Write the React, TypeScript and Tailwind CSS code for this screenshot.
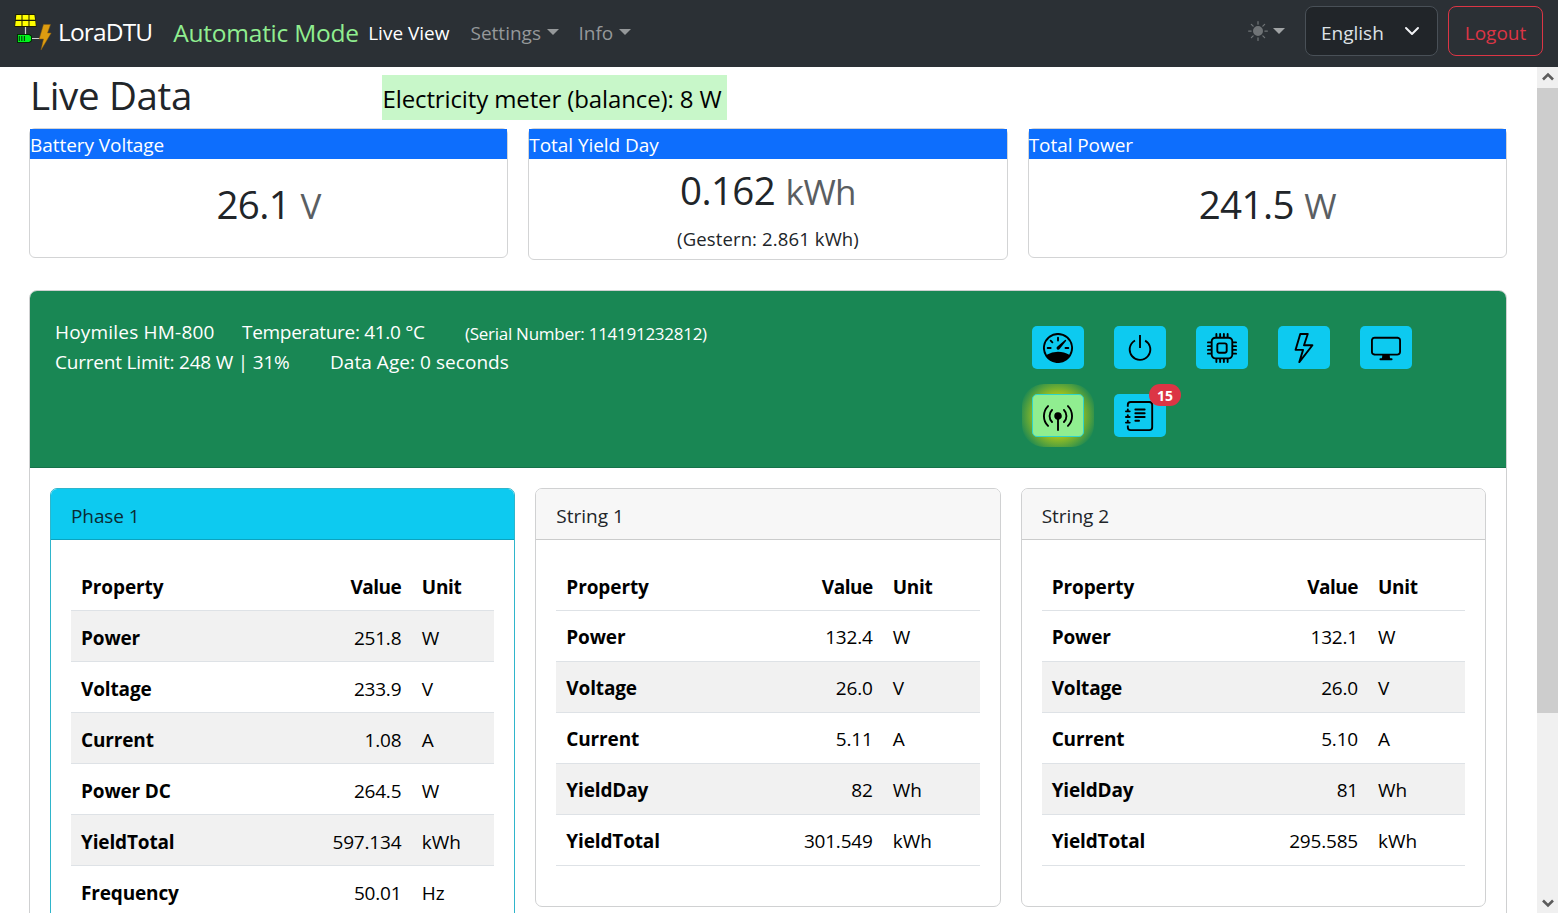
import React from "react";
import {
  BsSpeedometer,
  BsPower,
  BsCpu,
  BsLightning,
  BsDisplay,
  BsBroadcastPin,
  BsJournalText,
  BsSunFill,
} from "react-icons/bs";

type Row = [string, string, string];

const phaseRows: Row[] = [
  ["Power", "251.8", "W"],
  ["Voltage", "233.9", "V"],
  ["Current", "1.08", "A"],
  ["Power DC", "264.5", "W"],
  ["YieldTotal", "597.134", "kWh"],
  ["Frequency", "50.01", "Hz"],
];

const string1Rows: Row[] = [
  ["Power", "132.4", "W"],
  ["Voltage", "26.0", "V"],
  ["Current", "5.11", "A"],
  ["YieldDay", "82", "Wh"],
  ["YieldTotal", "301.549", "kWh"],
];

const string2Rows: Row[] = [
  ["Power", "132.1", "W"],
  ["Voltage", "26.0", "V"],
  ["Current", "5.10", "A"],
  ["YieldDay", "81", "Wh"],
  ["YieldTotal", "295.585", "kWh"],
];

function Caret() {
  return <span className="ml-[6px] inline-block border-x-6 border-t-6 border-x-transparent border-t-current align-[5px]" />;
}

function Logo() {
  return (
    <svg width="38" height="39" viewBox="0 0 38 39" className="shrink-0">
      <path d="M1.500 2H21L22.500 15H.5Z" fill="#1d1d00" />
      <g fill="#ffff00">
        <path d="M2.300 3h5.200v4.800h-5.700zM8.500 3h6v4.800h-6zM15.500 3h4.900l.7 4.800h-5.600z" />
        <path d="M1.700 9h5.800v5h-6.400zM8.500 9h6v5h-6zM15.500 9h5.800l.5 5h-6.300z" />
      </g>
      <path d="M11.500 15V22M18 26.500H26" stroke="#cfcfcf" strokeWidth="1.200" />
      <path d="M3 22H15.500L18 24V29L15.500 31H3Z" fill="#032d03" />
      <path d="M4 23H15L17 24.500V28.500L15 30H4Z" fill="#00f51d" />
      <path d="M5.300 24v5M7.800 24v5M10.400 24v5" stroke="#04400a" strokeWidth="1.100" />
      <path d="M29.500 12.500H36.500L33.500 21H37.200L27 38L29.500 27H25.200Z" fill="#dd9c10" stroke="#8a5f10" strokeWidth=".5" />
    </svg>
  );
}

function SummaryCard({ title, value, unit, note }: { title: string; value: string; unit: string; note?: string }) {
  return (
    <div className={note ? "h-[132px] flex-1 rounded-md border border-[#d3d4d5]" : "h-[130px] flex-1 rounded-md border border-[#d3d4d5]"}>
      <div className="h-[30px] bg-[#0d6efd] text-[19px] leading-[32px] tracking-[-0.06px] text-white">{title}</div>
      <div className={note ? "pt-[7px] text-center" : "pt-[21px] text-center"}>
        <div className="text-[38.5px] leading-[48px] tracking-[-0.6px]">
          {value} <span className="ml-[1px] text-[35px] text-[#5a5e62]">{unit}</span>
        </div>
        {note && <div className="pt-[8px] text-[18.5px] leading-[30px] tracking-[0.13px]">{note}</div>}
      </div>
    </div>
  );
}

function DataCard({ title, rows, primary }: { title: string; rows: Row[]; primary?: boolean }) {
  const unitWidth = primary ? "w-[83px] pl-[10.5px]" : "w-[97px] pl-[10px]";
  return (
    <div
      className={
        primary
          ? "h-[520px] flex-1 rounded-[7px] border border-[#2fb5cb]"
          : "h-[419px] flex-1 rounded-[7px] border border-[#d0d1d2]"
      }
    >
      <div
        className={
          primary
            ? "h-[51px] rounded-t-[6px] border-b border-[#0ba3bf] bg-[#0dcaf0] pl-5 text-[19px] leading-[54px] tracking-[-0.1px] text-[#0a2a33]"
            : "h-[51px] rounded-t-[6px] border-b border-[#cbcccc] bg-[#f7f7f7] pl-5 text-[19px] leading-[54px]"
        }
      >
        {title}
      </div>
      <div className="px-5 pt-[20px] text-black">
        <div className="flex h-[51px] border-b border-[#dee2e6] text-[19px] leading-[55px] font-bold tracking-[-0.3px]">
          <div className="flex-1 pl-[10px] tracking-[-0.1px]">Property</div>
          <div className="pr-[10px] text-right tracking-[-0.5px]">Value</div>
          <div className={unitWidth}>Unit</div>
        </div>
        {rows.map(([name, value, unit], i) => (
          <div
            key={name}
            className={
              (i % 2 === (primary ? 0 : 1) ? "bg-[#f1f1f1] " : "") +
              (primary ? "leading-[54px] " : "leading-[52px] ") +
              "flex h-[51px] border-b border-[#dee2e6] text-[19px]"
            }
          >
            <div className="flex-1 pl-[10px] font-bold tracking-[-0.15px]">{name}</div>
            <div className="pr-[10px] text-right tracking-[-0.2px]">{value}</div>
            <div className={unitWidth}>{unit}</div>
          </div>
        ))}
      </div>
    </div>
  );
}

function ActionButton({ children }: { children: React.ReactNode }) {
  return (
    <div className="relative flex h-[43px] w-[52px] items-center justify-center rounded-[5px] bg-[#0dcaf0] text-[30px] text-black">
      {children}
    </div>
  );
}

export default function App() {
  return (
    <div className="flex h-[913px] w-[1558px] flex-col overflow-hidden bg-white font-['Open_Sans','Noto_Sans',sans-serif] whitespace-nowrap text-[#212529]">
      <nav className="flex h-[67px] shrink-0 items-center bg-[#2b3035] pr-[15px] pb-[5px] pl-[14px] text-[19px]">
        <Logo />
        <span className="ml-[6px] pt-[3px] text-[24.5px] tracking-[-0.85px] text-white">LoraDTU</span>
        <span className="ml-[21px] pt-[5px] text-[24.5px] tracking-[-0.25px] text-[#90ee90]">Automatic Mode</span>
        <span className="ml-[9.5px] pt-[5px] text-white">Live View</span>
        <span className="ml-[21px] pt-[5px] text-[#95989a]">
          Settings
          <Caret />
        </span>
        <span className="ml-[19.5px] pt-[5px] text-[#95989a]">
          Info
          <Caret />
        </span>
        <span className="ml-auto flex items-center text-[20px] text-[#6f7376]">
          <BsSunFill />
          <span className="ml-[5px] inline-block border-x-6 border-t-6 border-x-transparent border-t-[#a0a3a5]" />
        </span>
        <div className="ml-[20px] flex h-[50px] w-[133px] items-center justify-between rounded-[8px] border border-[#495057] bg-[#212529] pr-[17px] pl-[15px] text-[#dee2e6]">
          <span className="pt-[5px]">English</span>
          <svg width="16" height="10" viewBox="0 0 16 10" fill="none" stroke="#f1f3f5" strokeWidth="2" strokeLinecap="round" strokeLinejoin="round">
            <path d="M2 2L8 8L14 2" />
          </svg>
        </div>
        <div className="ml-[10px] flex h-[50px] w-[95px] items-center justify-center rounded-[8px] border border-[#dc3545] pt-[5px] text-[#dc3545]">
          Logout
        </div>
      </nav>

      <div className="flex min-h-0 flex-1">
        <main className="w-[1537px] overflow-hidden pr-[30px] pl-[29px]">
          <div className="flex h-[61px] items-start">
            <h1 className="w-[353px] pt-[3px] pl-[1px] text-[38.5px] leading-[50px] tracking-[-0.35px]">Live Data</h1>
            <div className="mt-[8px] h-[45px] w-[345px] bg-[#c8f7c9] pl-[0.5px] text-[24px] leading-[48px] tracking-[-0.12px] text-black">
              Electricity meter (balance): 8 W
            </div>
          </div>

          <div className="flex items-start gap-[20px]">
            <SummaryCard title="Battery Voltage" value="26.1" unit="V" />
            <SummaryCard title="Total Yield Day" value="0.162" unit="kWh" note="(Gestern: 2.861 kWh)" />
            <SummaryCard title="Total Power" value="241.5" unit="W" />
          </div>

          <section className="mt-[30px] h-[700px] rounded-[8px] border border-[#cfd0d1]">
            <div className="flex h-[177px] justify-between rounded-t-[7px] border-b border-[#16724a] bg-[#198754] text-[19px] text-white">
              <div className="pt-[26px] pl-[25px]">
                <div className="flex h-[30px] leading-[30px]">
                  <span className="w-[187px] tracking-[0.2px]">Hoymiles HM-800</span>
                  <span className="w-[223px] tracking-[-0.3px]">Temperature: 41.0 °C</span>
                  <span className="pt-[2px] text-[17px] tracking-[-0.27px]">(Serial Number: 114191232812)</span>
                </div>
                <div className="flex leading-[30px]">
                  <span className="w-[275px] tracking-[-0.2px]">Current Limit: 248 W | 31%</span>
                  <span className="tracking-[0.05px]">Data Age: 0 seconds</span>
                </div>
              </div>
              <div className="flex w-[474px] flex-wrap content-start gap-x-[30px] gap-y-[25px] pt-[35px] pr-[60px]">
                <ActionButton><BsSpeedometer /></ActionButton>
                <ActionButton><BsPower /></ActionButton>
                <ActionButton><BsCpu /></ActionButton>
                <ActionButton><BsLightning /></ActionButton>
                <ActionButton><BsDisplay /></ActionButton>
                <div className="relative h-[43px] w-[52px]">
                  <div className="absolute -inset-[10px] rounded-[22px] bg-[radial-gradient(circle,#a8c61c_20px,#a8c61c00_40px)]" />
                  <div className="relative flex h-[43px] w-[52px] items-center justify-center rounded-[5px] border border-[#2fd5cb] bg-[#90ee90] text-[30px] text-black">
                    <BsBroadcastPin />
                  </div>
                </div>
                <ActionButton>
                  <BsJournalText />
                  <span className="absolute top-[-10px] left-[35px] flex h-[22px] w-[32px] items-center justify-center rounded-full bg-[#dc3545] pt-px text-[14px] font-bold text-white">
                    15
                  </span>
                </ActionButton>
              </div>
            </div>
            <div className="flex items-start gap-[20px] p-[20px]">
              <DataCard title="Phase 1" rows={phaseRows} primary />
              <DataCard title="String 1" rows={string1Rows} />
              <DataCard title="String 2" rows={string2Rows} />
            </div>
          </section>
        </main>

        <div className="flex w-[21px] flex-col items-center bg-[#f0f0f0]">
          <div className="flex h-[21px] items-center justify-center pb-[2px]">
            <svg width="12" height="9" viewBox="0 0 12 9" fill="none" stroke="#5c5c5c" strokeWidth="2.600">
              <path d="M1 7.500L6 2.500L11 7.500" />
            </svg>
          </div>
          <div className="h-[625px] w-full bg-[#cdcdcd]" />
          <div className="mt-auto flex h-[21px] items-center justify-center pt-[2px]">
            <svg width="12" height="9" viewBox="0 0 12 9" fill="none" stroke="#5c5c5c" strokeWidth="2.600">
              <path d="M1 1.500L6 6.500L11 1.500" />
            </svg>
          </div>
        </div>
      </div>
    </div>
  );
}
